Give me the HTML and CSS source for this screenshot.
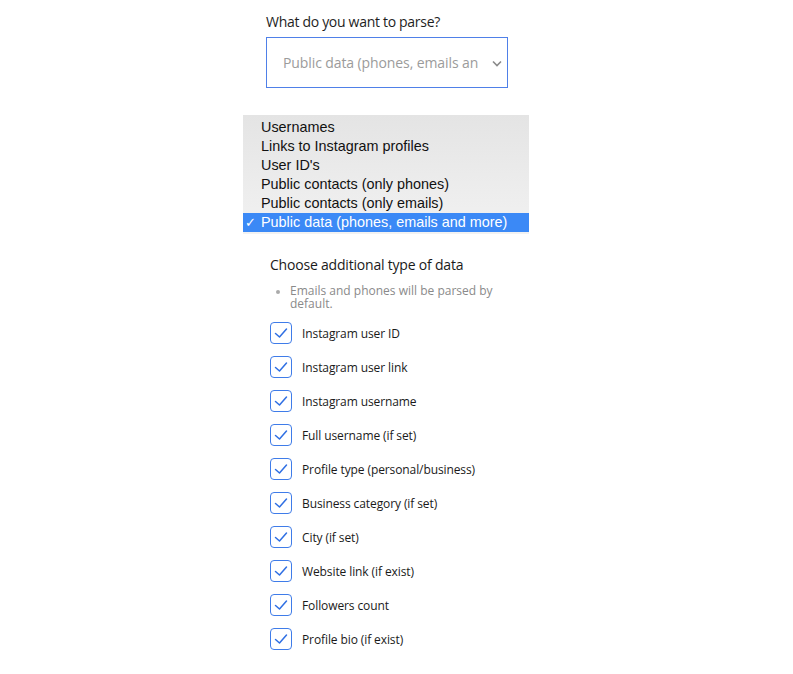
FILE: index.html
```html
<!DOCTYPE html>
<html>
<head>
<meta charset="utf-8">
<link rel="stylesheet" href="styles.css">
</head>
<body>
<div class="page">
  <div class="q-label">What do you want to parse?</div>
  <div class="select">
    <span class="select-text">Public data (phones, emails an</span>
    <svg class="chev" width="10" height="7" viewBox="0 0 10 7"><polyline points="1,1.5 5,5.5 9,1.5" fill="none" stroke="#8a8a8a" stroke-width="1.6"/></svg>
  </div>
  <div class="menu">
    <div class="opt">Usernames</div>
    <div class="opt">Links to Instagram profiles</div>
    <div class="opt">User ID's</div>
    <div class="opt">Public contacts (only phones)</div>
    <div class="opt">Public contacts (only emails)</div>
    <div class="opt selected"><span class="tick">✓</span>Public data (phones, emails and more)</div>
  </div>
  <div class="extra">
    <div class="extra-title">Choose additional type of data</div>
    <ul class="note">
      <li>Emails and phones will be parsed by default.</li>
    </ul>
    <div class="checks">
      <label class="check"><span class="box"><svg width="20" height="20" viewBox="0 0 20 20"><polyline points="4.5,10.5 8.5,14 15.5,6" fill="none" stroke="#2f6fe3" stroke-width="1.5" stroke-linecap="round" stroke-linejoin="round"/></svg></span>Instagram user ID</label>
      <label class="check"><span class="box"><svg width="20" height="20" viewBox="0 0 20 20"><polyline points="4.5,10.5 8.5,14 15.5,6" fill="none" stroke="#2f6fe3" stroke-width="1.5" stroke-linecap="round" stroke-linejoin="round"/></svg></span>Instagram user link</label>
      <label class="check"><span class="box"><svg width="20" height="20" viewBox="0 0 20 20"><polyline points="4.5,10.5 8.5,14 15.5,6" fill="none" stroke="#2f6fe3" stroke-width="1.5" stroke-linecap="round" stroke-linejoin="round"/></svg></span>Instagram username</label>
      <label class="check"><span class="box"><svg width="20" height="20" viewBox="0 0 20 20"><polyline points="4.5,10.5 8.5,14 15.5,6" fill="none" stroke="#2f6fe3" stroke-width="1.5" stroke-linecap="round" stroke-linejoin="round"/></svg></span>Full username (if set)</label>
      <label class="check"><span class="box"><svg width="20" height="20" viewBox="0 0 20 20"><polyline points="4.5,10.5 8.5,14 15.5,6" fill="none" stroke="#2f6fe3" stroke-width="1.5" stroke-linecap="round" stroke-linejoin="round"/></svg></span>Profile type (personal/business)</label>
      <label class="check"><span class="box"><svg width="20" height="20" viewBox="0 0 20 20"><polyline points="4.5,10.5 8.5,14 15.5,6" fill="none" stroke="#2f6fe3" stroke-width="1.5" stroke-linecap="round" stroke-linejoin="round"/></svg></span>Business category (if set)</label>
      <label class="check"><span class="box"><svg width="20" height="20" viewBox="0 0 20 20"><polyline points="4.5,10.5 8.5,14 15.5,6" fill="none" stroke="#2f6fe3" stroke-width="1.5" stroke-linecap="round" stroke-linejoin="round"/></svg></span>City (if set)</label>
      <label class="check"><span class="box"><svg width="20" height="20" viewBox="0 0 20 20"><polyline points="4.5,10.5 8.5,14 15.5,6" fill="none" stroke="#2f6fe3" stroke-width="1.5" stroke-linecap="round" stroke-linejoin="round"/></svg></span>Website link (if exist)</label>
      <label class="check"><span class="box"><svg width="20" height="20" viewBox="0 0 20 20"><polyline points="4.5,10.5 8.5,14 15.5,6" fill="none" stroke="#2f6fe3" stroke-width="1.5" stroke-linecap="round" stroke-linejoin="round"/></svg></span>Followers count</label>
      <label class="check"><span class="box"><svg width="20" height="20" viewBox="0 0 20 20"><polyline points="4.5,10.5 8.5,14 15.5,6" fill="none" stroke="#2f6fe3" stroke-width="1.5" stroke-linecap="round" stroke-linejoin="round"/></svg></span>Profile bio (if exist)</label>
    </div>
  </div>
</div>
</body>
</html>
```
FILE: styles.css
```css
html, body {
  margin: 0;
  padding: 0;
  background: #ffffff;
}
body {
  font-family: "Open Sans", "Noto Sans", sans-serif;
  color: #1a1a1a;
}
.page {
  padding: 14px 0 0 266px;
  display: flex;
  flex-direction: column;
  align-items: flex-start;
}
.q-label {
  font-size: 14px;
  line-height: 16px;
  height: 16px;
  font-weight: 500;
  color: #1e1e1e;
  letter-spacing: -0.3px;
}
.select {
  margin-top: 7px;
  box-sizing: border-box;
  width: 242px;
  height: 51px;
  border: 1px solid #4f80e8;
  display: flex;
  align-items: center;
  padding: 0 5px 0 16px;
}
.select-text {
  font-size: 14px;
  font-weight: 500;
  color: #9b9b9b;
  letter-spacing: -0.1px;
  white-space: nowrap;
}
.chev {
  display: block;
  margin-top: 1px;
  margin-left: auto;
}
.menu {
  margin-top: 27px;
  margin-left: -23px;
  width: 286px;
  box-sizing: border-box;
  padding: 3px 0 2px;
  background: linear-gradient(#e4e4e4, #f2f2f2);
  font-family: "Liberation Sans", Arial, sans-serif;
  font-size: 14.4px;
  color: #111;
}
.opt {
  height: 19px;
  line-height: 19px;
  padding-left: 18px;
  position: relative;
  white-space: nowrap;
}
.opt.selected {
  background: #3b89f6;
  color: #fff;
}
.tick {
  position: absolute;
  left: 2px;
  top: 0;
  font-size: 13px;
}
.extra {
  margin-top: 23px;
  margin-left: 4px;
  display: flex;
  flex-direction: column;
}
.extra-title {
  font-size: 14px;
  line-height: 16px;
  font-weight: 500;
  color: #1a1a1a;
  letter-spacing: -0.2px;
}
.note {
  margin: 11px 0 0;
  padding: 0 0 0 20px;
  width: 210px;
  font-size: 12px;
  line-height: 13px;
  font-weight: 500;
  color: #8a8a8a;
}
.note li::marker {
  font-size: 10px;
  color: #aaa;
}
.checks {
  margin-top: 12px;
  display: flex;
  flex-direction: column;
  gap: 12px;
}
.check {
  display: flex;
  align-items: center;
  gap: 10px;
  height: 22px;
  font-size: 12px;
  font-weight: 500;
  color: #1a1a1a;
  letter-spacing: -0.1px;
}
.box {
  box-sizing: border-box;
  width: 22px;
  height: 22px;
  border: 1.5px solid #3f7ce9;
  border-radius: 4px;
  display: flex;
  align-items: center;
  justify-content: center;
}
.box svg {
  display: block;
}
```
